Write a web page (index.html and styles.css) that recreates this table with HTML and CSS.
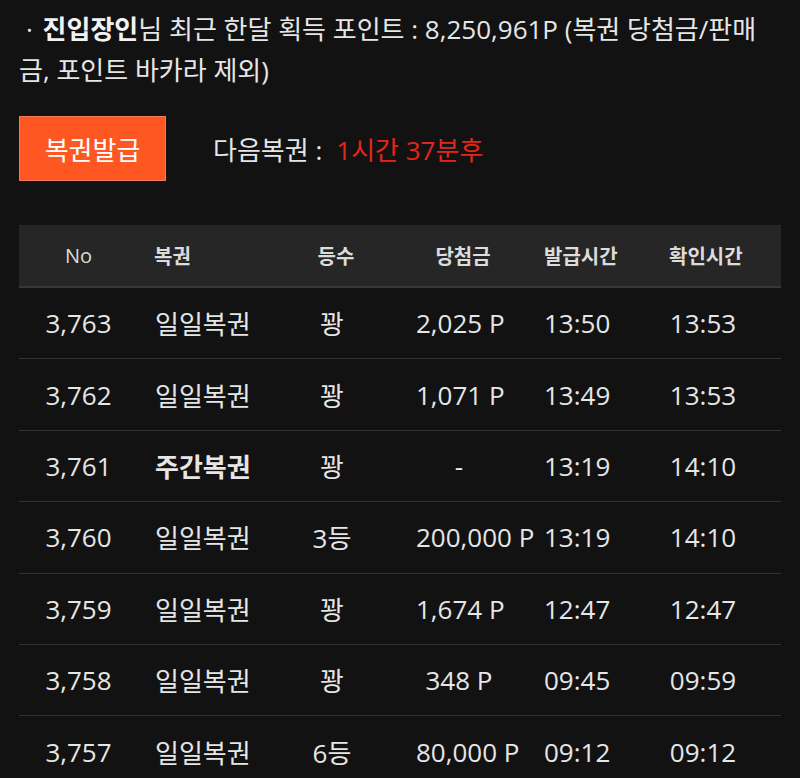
FILE: index.html
```html
<!DOCTYPE html>
<html lang="ko">
<head>
<meta charset="utf-8">
<link rel="stylesheet" href="styles.css">
</head>
<body>
<div class="page">
  <p class="summary"><span class="dot">·</span> <b>진입장인</b>님 최근 한달 획득 포인트 : 8,250,961P (복권 당첨금/판매금, 포인트 바카라 제외)</p>
  <div class="issue">
    <button class="btn">복권발급</button>
    <div class="next">다음복권 :<span class="remain">1시간 37분후</span></div>
  </div>
  <div class="table">
    <div class="row head">
      <div class="c1">No</div>
      <div class="c2 bold">복권</div>
      <div class="c3 bold">등수</div>
      <div class="c4 bold">당첨금</div>
      <div class="c5 bold">발급시간</div>
      <div class="c6 bold">확인시간</div>
    </div>
    <div class="row"><div class="c1">3,763</div><div class="c2">일일복권</div><div class="c3">꽝</div><div class="c4">2,025 P</div><div class="c5">13:50</div><div class="c6">13:53</div></div>
    <div class="row"><div class="c1">3,762</div><div class="c2">일일복권</div><div class="c3">꽝</div><div class="c4">1,071 P</div><div class="c5">13:49</div><div class="c6">13:53</div></div>
    <div class="row"><div class="c1">3,761</div><div class="c2 bold">주간복권</div><div class="c3">꽝</div><div class="c4">-</div><div class="c5">13:19</div><div class="c6">14:10</div></div>
    <div class="row"><div class="c1">3,760</div><div class="c2">일일복권</div><div class="c3">3등</div><div class="c4">200,000 P</div><div class="c5">13:19</div><div class="c6">14:10</div></div>
    <div class="row"><div class="c1">3,759</div><div class="c2">일일복권</div><div class="c3">꽝</div><div class="c4">1,674 P</div><div class="c5">12:47</div><div class="c6">12:47</div></div>
    <div class="row"><div class="c1">3,758</div><div class="c2">일일복권</div><div class="c3">꽝</div><div class="c4">348 P</div><div class="c5">09:45</div><div class="c6">09:59</div></div>
    <div class="row"><div class="c1">3,757</div><div class="c2">일일복권</div><div class="c3">6등</div><div class="c4">80,000 P</div><div class="c5">09:12</div><div class="c6">09:12</div></div>
  </div>
</div>
</body>
</html>
```

FILE: styles.css
```css
html, body {
  margin: 0;
  padding: 0;
  background: #121212;
}
body {
  font-family: "Open Sans", "Noto Sans CJK KR", sans-serif;
  color: #e6e6e6;
  overflow: hidden;
}
.page {
  padding: 9px 19px 0 19px;
}
.summary {
  margin: 0;
  font-size: 26px;
  line-height: 41px;
}
.summary .dot {
  margin-left: 7px;
  margin-right: 3px;
}
.summary b {
  color: #f2f2f2;
}
.issue {
  display: flex;
  align-items: center;
  gap: 47px;
  margin-top: 25px;
}
.btn {
  width: 147px;
  height: 65px;
  background: #ff5722;
  border: 1px solid #f47a5e;
  color: #ffffff;
  font-family: "Noto Sans CJK KR", sans-serif;
  font-size: 26px;
  padding: 0;
}
.next {
  font-size: 26px;
  color: #e6e6e6;
}
.remain {
  color: #e2261b;
  margin-left: 14px;
}
.table {
  margin-top: 44px;
  width: 762px;
}
.row {
  display: grid;
  grid-template-columns: 119px 152px 84px 149px 125px 133px;
  align-items: center;
  height: 71.4px;
  box-sizing: border-box;
  border-bottom: 1px solid #333333;
  font-size: 26px;
}
.row > div {
  white-space: nowrap;
  text-align: center;
}
.row .c2 {
  text-align: left;
  padding-left: 17px;
}
.row .c4 {
  padding-left: 42px;
  padding-right: 21px;
}
.row .c5 {
  padding-left: 21px;
  padding-right: 44px;
}
.row .c6 {
  padding-left: 21px;
  padding-right: 44px;
}
.bold {
  font-weight: 700;
}
.head {
  height: 63px;
  background: #262626;
  border-bottom: 2px solid #383838;
  font-size: 20px;
  color: #dcdcdc;
}
.head .c2 {
  padding-left: 16px;
}
.head .c3 {
  padding-left: 8px;
}
.head .c4 {
  padding-left: 50px;
}
```
